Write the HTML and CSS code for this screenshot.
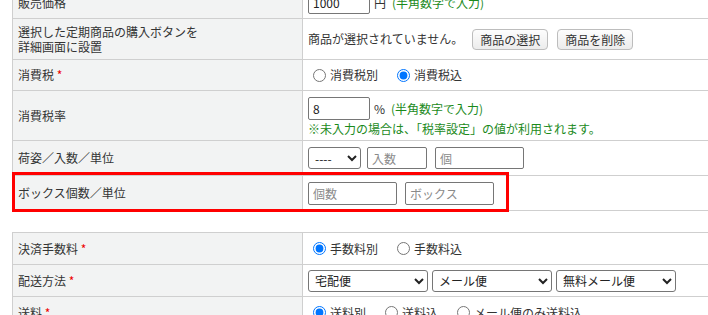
FILE: index.html
```html
<!DOCTYPE html>
<html lang="ja">
<head>
    <meta charset="UTF-8">
    <title>商品登録</title>
    <link rel="stylesheet" href="styles.css">
</head>
<body>
    <div id="formWrap">
        <table class="formTable firstTable">
            <colgroup><col class="colLabel"><col class="colValue"></colgroup>
            <tr class="rowPrice">
                <th>販売価格</th>
                <td><div class="line"><input type="text" class="inPrice" value="1000"><span class="unit">円</span><span class="note">(半角数字で入力)</span></div></td>
            </tr>
            <tr class="rowItem">
                <th>選択した定期商品の購入ボタンを<br>詳細画面に設置</th>
                <td><div class="line"><span class="plain">商品が選択されていません。</span><button class="btn">商品の選択</button><button class="btn">商品を削除</button></div></td>
            </tr>
            <tr class="rowTax">
                <th>消費税 <span class="req">*</span></th>
                <td><div class="radios">
                    <label><input type="radio" name="tax">消費税別</label>
                    <label><input type="radio" name="tax" checked>消費税込</label>
                </div></td>
            </tr>
            <tr class="rowRate">
                <th>消費税率</th>
                <td>
                    <div class="line"><input type="text" class="inPrice" value="8"><span class="unit">%</span><span class="note">(半角数字で入力)</span></div>
                    <p class="note">※未入力の場合は、「税率設定」の値が利用されます。</p>
                </td>
            </tr>
            <tr class="rowPack">
                <th>荷姿／入数／単位</th>
                <td><div class="line">
                    <select class="selPack"><option>----</option></select>
                    <input type="text" class="inSmall" placeholder="入数">
                    <input type="text" class="inMid wide" placeholder="個">
                </div></td>
            </tr>
            <tr class="rowBox">
                <th>ボックス個数／単位</th>
                <td><div class="line">
                    <input type="text" class="inMid" placeholder="個数">
                    <input type="text" class="inMid wide" placeholder="ボックス">
                </div></td>
            </tr>
        </table>

        <table class="formTable secondTable">
            <colgroup><col class="colLabel"><col class="colValue"></colgroup>
            <tr class="rowFee">
                <th>決済手数料 <span class="req">*</span></th>
                <td><div class="radios">
                    <label><input type="radio" name="fee" checked>手数料別</label>
                    <label><input type="radio" name="fee">手数料込</label>
                </div></td>
            </tr>
            <tr class="rowShip">
                <th>配送方法 <span class="req">*</span></th>
                <td><div class="line">
                    <select class="selShip"><option>宅配便</option></select>
                    <select class="selShip"><option>メール便</option></select>
                    <select class="selShip"><option>無料メール便</option></select>
                </div></td>
            </tr>
            <tr class="rowPost">
                <th>送料 <span class="req">*</span></th>
                <td><div class="radios">
                    <label><input type="radio" name="post" checked>送料別</label>
                    <label><input type="radio" name="post">送料込</label>
                    <label><input type="radio" name="post">メール便のみ送料込</label>
                </div></td>
            </tr>
        </table>

        <div class="markBox"></div>
    </div>
</body>
</html>
```

FILE: styles.css
```css
*{margin: 0;padding: 0;box-sizing: border-box;}
html, body{width: 708px;height: 315px;overflow: hidden;background: #fff;}
body{
    font-family: "Noto Sans CJK JP", "Noto Sans", sans-serif;
    font-size: 12px;
    line-height: 16px;
    color: #333;
}

#formWrap{
    position: relative;
    margin-top: -14px;
    padding-left: 12px;
    width: 820px;
}

.formTable{
    border-collapse: collapse;
    table-layout: fixed;
    width: 800px;
}
.formTable col.colLabel{width: 290px;}
.formTable col.colValue{width: 510px;}

.formTable th, .formTable td{
    border: 1px solid #cfcfcf;
    vertical-align: middle;
    text-align: left;
    font-weight: normal;
    padding: 0 5px;
}
.formTable th{
    background-color: #f2f3f3;
    padding-left: 5px;
}
.rowItem th{line-height: 15px;}

.secondTable{margin-top: 21px;}

.rowPrice{height: 32px;}
.rowItem{height: 41px;}
.rowTax{height: 31px;}
.rowRate{height: 50px;}
.rowPack{height: 35px;}
.rowBox{height: 35px;}
.rowFee{height: 32px;}
.rowShip{height: 32px;}
.rowPost{height: 32px;}

.req{color: #e00;}

.line{
    display: flex;
    align-items: center;
    gap: 6px;
}

.note{color: #1b8a1b;}
.unit{margin-left: -2px;}
.rowRate .line{padding-top: 3px;}
.rowRate p.note{margin-top: 1px;}

input[type="text"]{
    height: 23px;
    border: 1px solid #767676;
    border-radius: 2px;
    padding: 1px 4px;
    font-family: inherit;
    font-size: 12px;
    color: #222;
}
input::placeholder{color: #8a8a8a;}

.inPrice{width: 62px;}
.inSmall{width: 60px;}
.inMid{width: 89px;}
.wide{margin-left: 2px;}
.rowPack input[type="text"]{height: 22px;}

select{
    height: 22px;
    border: 1px solid #767676;
    border-radius: 3px;
    font-family: inherit;
    font-size: 12px;
    color: #222;
    background: #fff;
    padding: 0 2px;
}
.selPack{width: 53px;}
.selShip{width: 120px;}
.rowShip .line{gap: 4px;}

.plain{margin-right: 3px;}
.btn{
    width: 76px;
    height: 21px;
    border: 1px solid #bdbdbd;
    border-radius: 4px;
    background: linear-gradient(#fdfdfd, #ececec);
    font-family: inherit;
    font-size: 12px;
    color: #333;
    margin-right: 3px;
}

.radios{
    display: flex;
    align-items: center;
    gap: 16px;
    padding-left: 2px;
}
.radios label{
    display: flex;
    align-items: center;
}
.radios input{
    width: 13px;
    height: 13px;
    margin: 0 4px 0 3px;
}

/* 注目枠 */
.markBox{
    position: absolute;
    left: 12px;
    top: 186px;
    width: 497px;
    height: 40px;
    border: 3px solid #f00;
}
```
